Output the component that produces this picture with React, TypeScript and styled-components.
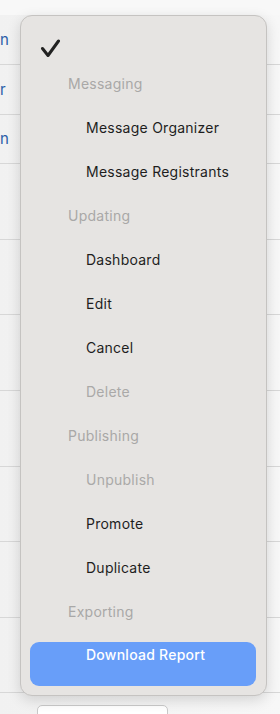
import React from "react";
import styled, { createGlobalStyle } from "styled-components";

const GlobalStyle = createGlobalStyle`
  html, body {
    margin: 0;
    padding: 0;
    overflow: hidden;
    background: #f6f6f6;
  }
  * {
    box-sizing: border-box;
  }
`;

const Page = styled.div`
  position: relative;
  width: 280px;
  height: 714px;
  overflow: hidden;
  background: linear-gradient(90deg, #f1f1f1 0%, #f7f7f7 100%);
  font-family: Inter, "Liberation Sans", sans-serif;
`;

const TopStrip = styled.div`
  height: 15px;
  background: #f8f8f8;
`;

const TableRow = styled.div<{ h: number }>`
  height: ${props => props.h}px;
  border-bottom: 1px solid #d7d7d7;
  display: flex;
  align-items: center;
`;

// only the tail of the link column peeks out from under the menu
const LinkTail = styled.div`
  padding-left: 0;
  font-size: 15px;
  line-height: 18px;
  color: #2c5fa8;
`;

const Footer = styled.div`
  padding: 12px 0 0 37px;
`;

const GhostButton = styled.div`
  width: 131px;
  height: 30px;
  background: #ffffff;
  border: 1px solid #c9c9c9;
  border-radius: 5px;
`;

const Menu = styled.div`
  position: absolute;
  left: 20px;
  top: 15px;
  width: 247px;
  height: 681px;
  padding: 1px 0 9px;
  background: #e6e4e2;
  border: 1px solid #c5c3c1;
  border-radius: 12px;
  box-shadow: 0 4px 14px rgba(0, 0, 0, 0.14);
  display: flex;
  flex-direction: column;
`;

const CheckRow = styled.div`
  height: 44px;
  padding: 0 0 3px 19px;
  display: flex;
  align-items: flex-end;
`;

const Header = styled.div`
  height: 44px;
  padding-left: 47px;
  display: flex;
  align-items: center;
  font-size: 14px;
  letter-spacing: 0.25px;
  color: #a9a8a7;
`;

const Item = styled.div<{ disabled?: boolean }>`
  height: 44px;
  padding-left: 65px;
  display: flex;
  align-items: center;
  font-size: 14px;
  letter-spacing: 0.25px;
  color: ${props => (props.disabled ? "#aaa9a8" : "#1e1e1e")};
`;

const PrimaryItem = styled.div`
  height: 44px;
  margin: 9px 10px 0 9px;
  padding: 4px 0 0 56px;
  line-height: 18px;
  border-radius: 9px;
  background: #689ef9;
  color: #ffffff;
  font-size: 14px;
  font-weight: 500;
  letter-spacing: 0.25px;
`;

const tableRows = [
  { h: 50, link: "n" },
  { h: 50, link: "r" },
  { h: 49, link: "n" },
  { h: 76 },
  { h: 75 },
  { h: 76 },
  { h: 76 },
  { h: 75 },
  { h: 76 },
  { h: 75 },
];

type Entry =
  | { kind: "header"; label: string }
  | { kind: "item"; label: string; disabled?: boolean };

const entries: Entry[] = [
  { kind: "header", label: "Messaging" },
  { kind: "item", label: "Message Organizer" },
  { kind: "item", label: "Message Registrants" },
  { kind: "header", label: "Updating" },
  { kind: "item", label: "Dashboard" },
  { kind: "item", label: "Edit" },
  { kind: "item", label: "Cancel" },
  { kind: "item", label: "Delete", disabled: true },
  { kind: "header", label: "Publishing" },
  { kind: "item", label: "Unpublish", disabled: true },
  { kind: "item", label: "Promote" },
  { kind: "item", label: "Duplicate" },
  { kind: "header", label: "Exporting" },
];

const CheckIcon = () => (
  <svg width="21" height="19" viewBox="0 0 21 19" fill="none">
    <path
      d="M2.5 9.5 L8 16.5 L18.5 2"
      stroke="#222222"
      strokeWidth="3"
      strokeLinecap="round"
      strokeLinejoin="round"
    />
  </svg>
);

const App = () => {
  return (
    <Page>
      <GlobalStyle />
      <TopStrip />
      {tableRows.map((row, i) => (
        <TableRow key={i} h={row.h}>
          {row.link && <LinkTail>{row.link}</LinkTail>}
        </TableRow>
      ))}
      <Footer>
        <GhostButton />
      </Footer>

      <Menu>
        <CheckRow>
          <CheckIcon />
        </CheckRow>
        {entries.map(entry =>
          entry.kind === "header" ? (
            <Header key={entry.label}>{entry.label}</Header>
          ) : (
            <Item key={entry.label} disabled={entry.disabled}>
              {entry.label}
            </Item>
          )
        )}
        <PrimaryItem>Download Report</PrimaryItem>
      </Menu>
    </Page>
  );
};

export default App;
